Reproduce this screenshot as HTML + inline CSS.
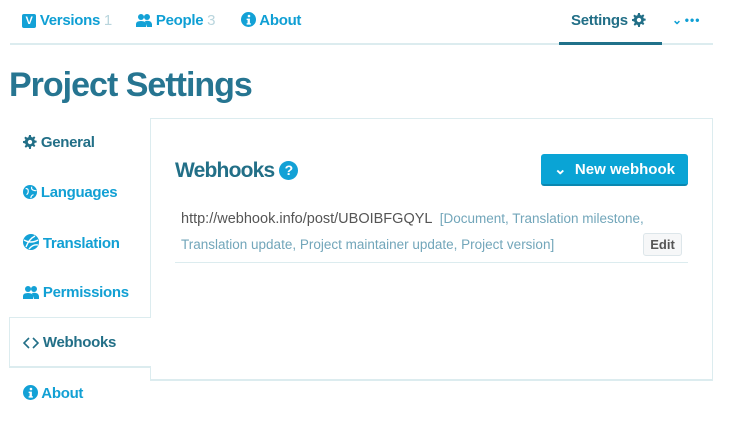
<!DOCTYPE html>
<html><head><style>
*{margin:0;padding:0;box-sizing:border-box}
body{width:729px;height:429px;background:#fff;font-family:"Liberation Sans",sans-serif;position:relative;overflow:hidden;color:#226f87}
.a{position:absolute;white-space:nowrap}
.nav{font-size:15px;color:#0f9fd4;top:12px;font-weight:bold;letter-spacing:-0.3px}
.cnt{color:#b9d5dd;font-weight:normal}
.side{font-size:15px;font-weight:bold;left:23px;color:#12a0d4;letter-spacing:-0.3px}
.dark{color:#226f87}
svg{vertical-align:-2px}
</style></head><body>
<svg width="0" height="0" style="position:absolute"><defs>
<g id="gear"><path d="M7 0h2l.4 2.2 1.4.6 1.9-1.3 1.4 1.4-1.3 1.9.6 1.4 2.2.4v2l-2.2.4-.6 1.4 1.3 1.9-1.4 1.4-1.9-1.3-1.4.6L9 16H7l-.4-2.2-1.4-.6-1.9 1.3-1.4-1.4 1.3-1.9-.6-1.4L0 9V7l2.2-.4.6-1.4-1.3-1.9 1.4-1.4 1.9 1.3 1.4-.6z"/></g>
</defs></svg>
<div class="a" style="left:10px;top:43px;width:703px;height:2px;background:#dcecef"></div>
<div class="a" style="left:559px;top:42px;width:103px;height:3px;background:#20718a"></div>

<div class="a nav" style="left:22px"><span style="display:inline-block;width:14px;height:14px;background:#13a1d6;color:#fff;font-size:11px;text-align:center;line-height:14px;border-radius:2px;vertical-align:1px">V</span> Versions <span class="cnt">1</span></div>
<div class="a nav" style="left:136px"><svg width="16" height="14" viewBox="0 0 16 14"><circle cx="5" cy="4" r="3" fill="#13a1d6"/><circle cx="11" cy="4" r="3" fill="#13a1d6"/><path d="M0 14v-3q0-3 5-3t5 3v3zM9 8q6-1 7 3v3h-5z" fill="#13a1d6"/></svg> People <span class="cnt">3</span></div>
<div class="a nav" style="left:241px"><svg width="15" height="15" viewBox="0 0 16 16"><circle cx="8" cy="8" r="8" fill="#13a1d6"/><circle cx="8.5" cy="4.3" r="1.4" fill="#fff"/><path d="M6 7h3.5v5h1v1.5h-4.5v-1.5h1v-3.5h-1z" fill="#fff"/></svg> About</div>
<div class="a nav" style="left:571px;color:#226f87">Settings <svg width="14" height="14" viewBox="0 0 16 16"><use href="#gear" fill="#226f87"/><circle cx="8" cy="8" r="2.5" fill="#fff"/></svg></div>
<div class="a nav" style="left:672px;font-size:12px;top:13px">⌄ <b style="letter-spacing:1px">•••</b></div>

<div class="a" style="left:9px;top:66px;font-size:34px;font-weight:bold;color:#267591;letter-spacing:-1px">Project Settings</div>

<div class="a" style="left:150px;top:118px;width:563px;height:263px;border:1px solid #dcecef;border-bottom:2px solid #dcecef"></div>
<div class="a" style="left:9px;top:317px;width:142px;height:51px;background:#fff;border:1px solid #dcecef;border-right:none;border-bottom:2px solid #dcecef"></div>

<div class="a side dark" style="top:134px"><svg width="14" height="14" viewBox="0 0 16 16"><use href="#gear" fill="#226f87"/><circle cx="8" cy="8" r="2.5" fill="#fff"/></svg> General</div>
<div class="a side" style="top:184px"><svg width="14" height="14" viewBox="0 0 16 16"><circle cx="8" cy="8" r="8" fill="#13a1d6"/><path d="M3 4q3 0 3 3t-2 4M10 2q-1 3 2 4t3 0M9 15q0-3 3-4" stroke="#fff" stroke-width="1.3" fill="none"/></svg> Languages</div>
<div class="a side" style="top:234px"><svg width="16" height="16" viewBox="0 0 16 16"><circle cx="8" cy="8" r="8" fill="#13a1d6"/><path d="M1 6q7 4 14 0M3 13q3-8 9-11M6 15q4-5 9-4" stroke="#fff" stroke-width="1.4" fill="none"/></svg> Translation</div>
<div class="a side" style="top:284px"><svg width="16" height="14" viewBox="0 0 16 14"><circle cx="5" cy="4" r="3" fill="#13a1d6"/><circle cx="11" cy="4" r="3" fill="#13a1d6"/><path d="M0 14v-3q0-3 5-3t5 3v3zM9 8q6-1 7 3v3h-5z" fill="#13a1d6"/></svg> Permissions</div>
<div class="a side dark" style="top:334px"><svg width="16" height="12" viewBox="0 0 16 12"><path d="M6 1L1 6l5 5M10 1l5 5-5 5" stroke="#226f87" stroke-width="1.6" fill="none"/></svg> Webhooks</div>
<div class="a side" style="top:385px"><svg width="15" height="15" viewBox="0 0 16 16"><circle cx="8" cy="8" r="8" fill="#13a1d6"/><circle cx="8.5" cy="4.3" r="1.4" fill="#fff"/><path d="M6 7h3.5v5h1v1.5h-4.5v-1.5h1v-3.5h-1z" fill="#fff"/></svg> About</div>

<div class="a" style="left:175px;top:159px;font-size:21px;font-weight:bold;color:#226f87;letter-spacing:-0.8px">Webhooks <span style="display:inline-block;width:19px;height:19px;border-radius:50%;background:#13a1d6;color:#fff;font-size:14px;text-align:center;line-height:19px;vertical-align:2px;letter-spacing:0">?</span></div>

<div class="a" style="left:541px;top:154px;width:147px;height:32px;background:#0aa4d5;border-radius:3px;border-bottom:2px solid #0a87b0;color:#fff;font-size:15px;font-weight:bold;text-align:center;line-height:31px">⌄&nbsp; New webhook</div>

<div class="a" style="left:181px;top:211px;font-size:14.5px;color:#555">http://webhook.info/post/UBOIBFGQYL <span style="font-size:13.5px;color:#72a6ba">&nbsp;[Document, Translation milestone,</span></div>
<div class="a" style="left:181px;top:237px;font-size:13.5px;color:#72a6ba">Translation update, Project maintainer update, Project version]</div>
<div class="a" style="left:643px;top:233px;width:39px;height:23px;border:1px solid #dde6ea;border-radius:3px;background:#f6f7f8;font-size:13px;font-weight:bold;color:#555;text-align:center;line-height:21px">Edit</div>
<div class="a" style="left:175px;top:262px;width:513px;height:1px;background:#dcecef"></div>
</body></html>
